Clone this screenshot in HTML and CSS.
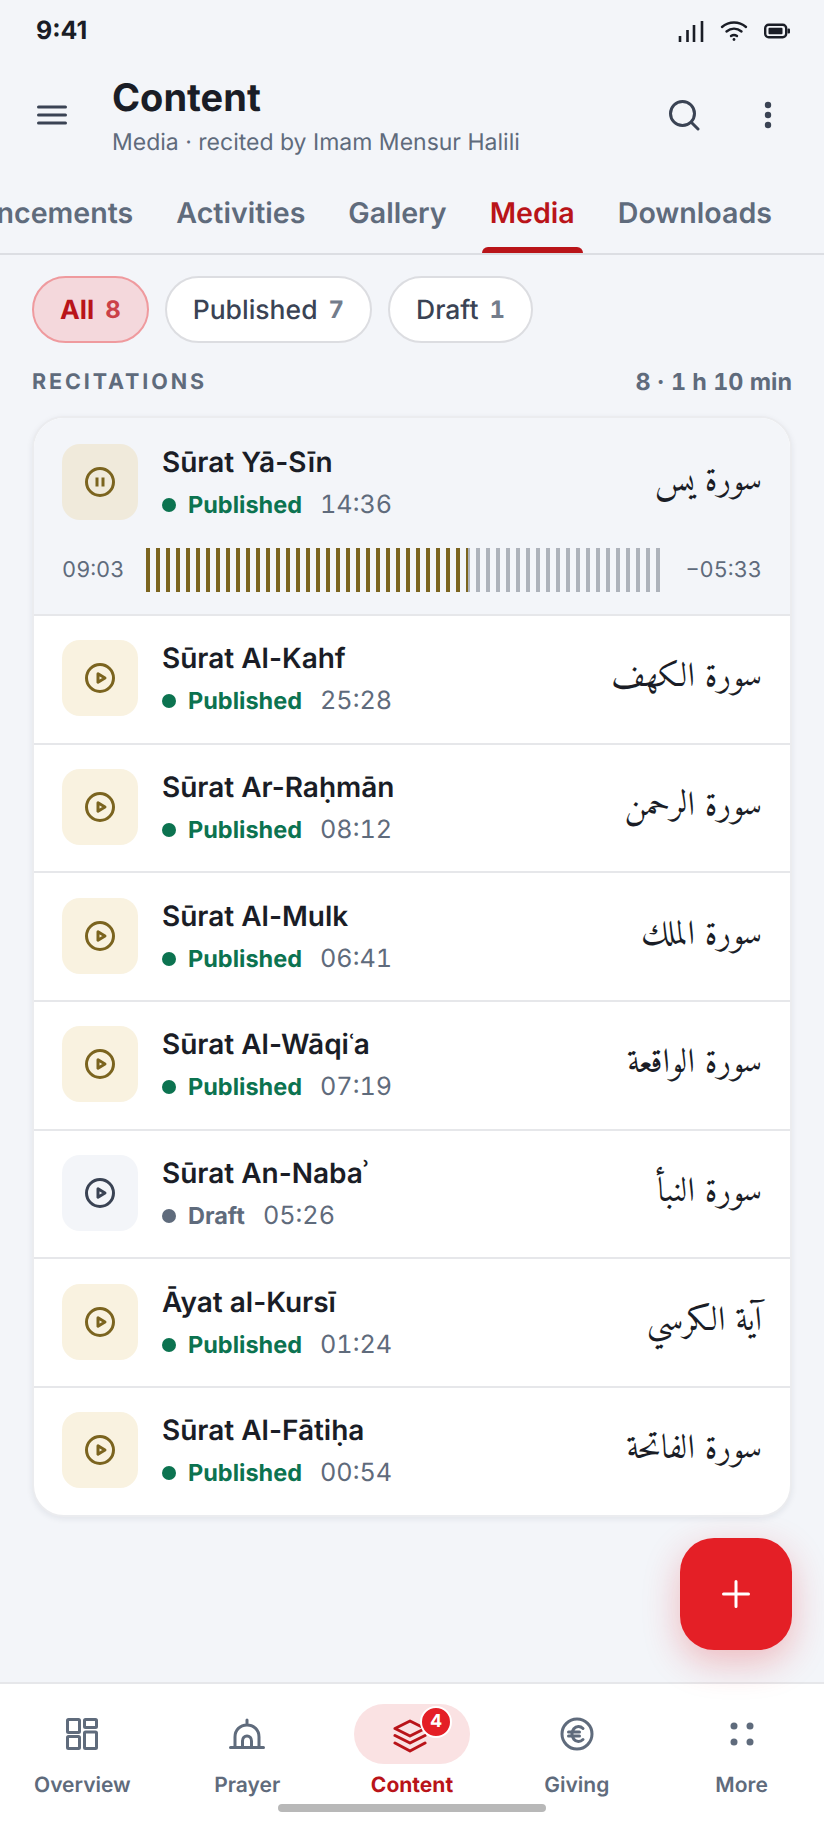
FILE: index.html
```html
<!DOCTYPE html>
<html lang="en">
<head>
    <meta charset="UTF-8">
    <meta name="viewport" content="width=device-width, initial-scale=1.0">
    <title>Content</title>
    <link rel="stylesheet" href="styles.css">
</head>
<body>
    <div class="status-bar">
        <span class="status-time">9:41</span>
        <div class="status-icons">
            <svg width="26" height="22" viewBox="0 0 26 22" fill="none" stroke="#1a1d26" stroke-width="2.6"><path d="M2 22v-6M9.500 22V10M16 22V5M24 22V1"/></svg>
            <svg width="28" height="20" viewBox="0 0 28 20" fill="none" stroke="#1a1d26" stroke-width="2.4" stroke-linecap="round"><path d="M2 6c7-6 17-6 24 0M6.500 10.500c4.500-3.800 10.500-3.800 15 0M11 15c1.800-1.300 4.200-1.300 6 0"/><circle cx="14" cy="18.500" r="1.400" fill="#1a1d26" stroke="none"/></svg>
            <svg width="26" height="16" viewBox="0 0 26 16" fill="none"><rect x="1.200" y="1.700" width="21" height="12.600" rx="3.500" stroke="#1a1d26" stroke-width="2.400"/><rect x="4.500" y="4.800" width="14" height="6.400" rx="1" fill="#1a1d26"/><rect x="23.500" y="5.500" width="2.500" height="5" rx="1" fill="#1a1d26"/></svg>
        </div>
    </div>

    <header class="app-header">
        <svg class="menu-icon" width="30" height="20" viewBox="0 0 30 20" fill="none" stroke="#3a4354" stroke-width="3" stroke-linecap="round"><path d="M1.500 2h27M1.500 10h27M1.500 18h27"/></svg>
        <div class="header-titles">
            <h1>Content</h1>
            <p>Media · recited by Imam Mensur Halili</p>
        </div>
        <svg class="search-icon" width="32" height="32" viewBox="0 0 32 32" fill="none" stroke="#3a4354" stroke-width="3" stroke-linecap="round"><circle cx="14.500" cy="14.500" r="12"/><path d="M23.500 23.500l6.500 6.500"/></svg>
        <svg class="more-icon" width="8" height="28" viewBox="0 0 8 28" fill="#3a4354"><circle cx="4" cy="4" r="3.200"/><circle cx="4" cy="14" r="3.200"/><circle cx="4" cy="24" r="3.200"/></svg>
    </header>

    <nav class="tabs">
        <a class="tab tab-cut" href="#">Announcements</a>
        <a class="tab" href="#">Activities</a>
        <a class="tab" href="#">Gallery</a>
        <a class="tab active" href="#">Media</a>
        <a class="tab" href="#">Downloads</a>
    </nav>

    <main>
        <div class="chips">
            <div class="chip chip-active">All <span>8</span></div>
            <div class="chip">Published <span>7</span></div>
            <div class="chip">Draft <span>1</span></div>
        </div>

        <div class="section-head">
            <h2>RECITATIONS</h2>
            <span>8 · 1 h 10 min</span>
        </div>

        <section class="card">
            <div class="row row-playing">
                <div class="row-top">
                    <div class="thumb thumb-playing">
                        <svg width="32" height="32" viewBox="0 0 32 32" fill="none" stroke="#7b641f" stroke-width="3"><circle cx="16" cy="16" r="13.500"/><path d="M13 11.500v9M19 11.500v9"/></svg>
                    </div>
                    <div class="row-text">
                        <div class="name">Sūrat Yā-Sīn</div>
                        <div class="meta"><i class="dot"></i><b>Published</b><span>14:36</span></div>
                    </div>
                    <div class="arabic" lang="ar" dir="rtl">سورة يس</div>
                </div>
                <div class="player">
                    <span class="time time-played">09:03</span>
                    <div class="wave"></div>
                    <span class="time time-left">−05:33</span>
                </div>
            </div>

            <div class="row">
                <div class="row-top">
                    <div class="thumb"><svg width="32" height="32" viewBox="0 0 32 32" fill="none" stroke="#7b641f" stroke-width="3" stroke-linejoin="round"><circle cx="16" cy="16" r="13.500"/><path d="M14 11.800l7 4.200-7 4.200z"/></svg></div>
                    <div class="row-text">
                        <div class="name">Sūrat Al-Kahf</div>
                        <div class="meta"><i class="dot"></i><b>Published</b><span>25:28</span></div>
                    </div>
                    <div class="arabic" lang="ar" dir="rtl">سورة الكهف</div>
                </div>
            </div>

            <div class="row">
                <div class="row-top">
                    <div class="thumb"><svg width="32" height="32" viewBox="0 0 32 32" fill="none" stroke="#7b641f" stroke-width="3" stroke-linejoin="round"><circle cx="16" cy="16" r="13.500"/><path d="M14 11.800l7 4.200-7 4.200z"/></svg></div>
                    <div class="row-text">
                        <div class="name">Sūrat Ar-Raḥmān</div>
                        <div class="meta"><i class="dot"></i><b>Published</b><span>08:12</span></div>
                    </div>
                    <div class="arabic" lang="ar" dir="rtl">سورة الرحمن</div>
                </div>
            </div>

            <div class="row">
                <div class="row-top">
                    <div class="thumb"><svg width="32" height="32" viewBox="0 0 32 32" fill="none" stroke="#7b641f" stroke-width="3" stroke-linejoin="round"><circle cx="16" cy="16" r="13.500"/><path d="M14 11.800l7 4.200-7 4.200z"/></svg></div>
                    <div class="row-text">
                        <div class="name">Sūrat Al-Mulk</div>
                        <div class="meta"><i class="dot"></i><b>Published</b><span>06:41</span></div>
                    </div>
                    <div class="arabic" lang="ar" dir="rtl">سورة الملك</div>
                </div>
            </div>

            <div class="row">
                <div class="row-top">
                    <div class="thumb"><svg width="32" height="32" viewBox="0 0 32 32" fill="none" stroke="#7b641f" stroke-width="3" stroke-linejoin="round"><circle cx="16" cy="16" r="13.500"/><path d="M14 11.800l7 4.200-7 4.200z"/></svg></div>
                    <div class="row-text">
                        <div class="name">Sūrat Al-Wāqiʿa</div>
                        <div class="meta"><i class="dot"></i><b>Published</b><span>07:19</span></div>
                    </div>
                    <div class="arabic" lang="ar" dir="rtl">سورة الواقعة</div>
                </div>
            </div>

            <div class="row">
                <div class="row-top">
                    <div class="thumb thumb-draft"><svg width="32" height="32" viewBox="0 0 32 32" fill="none" stroke="#3a4354" stroke-width="3" stroke-linejoin="round"><circle cx="16" cy="16" r="13.500"/><path d="M14 11.800l7 4.200-7 4.200z"/></svg></div>
                    <div class="row-text">
                        <div class="name">Sūrat An-Nabaʾ</div>
                        <div class="meta meta-draft"><i class="dot"></i><b>Draft</b><span>05:26</span></div>
                    </div>
                    <div class="arabic" lang="ar" dir="rtl">سورة النبأ</div>
                </div>
            </div>

            <div class="row">
                <div class="row-top">
                    <div class="thumb"><svg width="32" height="32" viewBox="0 0 32 32" fill="none" stroke="#7b641f" stroke-width="3" stroke-linejoin="round"><circle cx="16" cy="16" r="13.500"/><path d="M14 11.800l7 4.200-7 4.200z"/></svg></div>
                    <div class="row-text">
                        <div class="name">Āyat al-Kursī</div>
                        <div class="meta"><i class="dot"></i><b>Published</b><span>01:24</span></div>
                    </div>
                    <div class="arabic" lang="ar" dir="rtl">آية الكرسي</div>
                </div>
            </div>

            <div class="row">
                <div class="row-top">
                    <div class="thumb"><svg width="32" height="32" viewBox="0 0 32 32" fill="none" stroke="#7b641f" stroke-width="3" stroke-linejoin="round"><circle cx="16" cy="16" r="13.500"/><path d="M14 11.800l7 4.200-7 4.200z"/></svg></div>
                    <div class="row-text">
                        <div class="name">Sūrat Al-Fātiḥa</div>
                        <div class="meta"><i class="dot"></i><b>Published</b><span>00:54</span></div>
                    </div>
                    <div class="arabic" lang="ar" dir="rtl">سورة الفاتحة</div>
                </div>
            </div>
        </section>

        <button class="fab" type="button" aria-label="Add">
            <svg width="28" height="28" viewBox="0 0 28 28" fill="none" stroke="#fff" stroke-width="3" stroke-linecap="round"><path d="M14 1.500v25M1.500 14h25"/></svg>
        </button>
    </main>

    <nav class="bottom-nav">
        <a class="nav-item" href="#">
            <span class="nav-icon"><svg width="32" height="32" viewBox="0 0 32 32" fill="none" stroke="#5f6b7c" stroke-width="3"><rect x="1.500" y="1.500" width="12" height="13" rx="1"/><rect x="18.500" y="1.500" width="12" height="8" rx="1"/><rect x="1.500" y="18.500" width="12" height="12" rx="1"/><rect x="18.500" y="14" width="12" height="16.500" rx="1"/></svg></span>
            Overview
        </a>
        <a class="nav-item" href="#">
            <span class="nav-icon"><svg width="36" height="32" viewBox="0 0 36 32" fill="none" stroke="#5f6b7c" stroke-width="3" stroke-linecap="round"><path d="M1.500 29.500h33M6 29V19C6 12 11 7 18 7s12 5 12 12v10M13.500 29v-6c0-3 2-5 4.500-5s4.500 2 4.500 5v6M18 2v5"/></svg></span>
            Prayer
        </a>
        <a class="nav-item active" href="#">
            <span class="nav-icon">
                <svg class="layers-icon" width="34" height="34" viewBox="0 0 34 34" fill="none" stroke="#b91419" stroke-width="3" stroke-linejoin="round" stroke-linecap="round"><path d="M17 2L2 9.500 17 17l15-7.500zM2 16.500L17 24l15-7.500M2 24l15 8 15-8"/></svg>
                <em class="badge">4</em>
            </span>
            Content
        </a>
        <a class="nav-item" href="#">
            <span class="nav-icon"><svg width="34" height="34" viewBox="0 0 34 34" fill="none" stroke="#5f6b7c" stroke-width="3"><circle cx="17" cy="17" r="15"/><path d="M23 11.500c-1.300-1.300-3-2-4.600-2-3.700 0-6.400 3.300-6.400 7.500s2.700 7.500 6.400 7.500c1.600 0 3.300-.7 4.600-2M8.500 15h11M8.500 19h11" stroke-linecap="round"/></svg></span>
            Giving
        </a>
        <a class="nav-item" href="#">
            <span class="nav-icon"><svg width="24" height="24" viewBox="0 0 24 24" fill="#5f6b7c"><circle cx="4" cy="4" r="3.500"/><circle cx="20" cy="4" r="3.500"/><circle cx="4" cy="20" r="3.500"/><circle cx="20" cy="20" r="3.500"/></svg></span>
            More
        </a>
        <div class="home-bar"></div>
    </nav>
</body>
</html>
```

FILE: styles.css
```css
:root {
    --bg: #f3f5f9;
    --white: #ffffff;
    --ink: #1a1d26;
    --slate: #5f6b7c;
    --slate-dark: #3a4354;
    --line: #e6e7ea;
    --red: #b91419;
    --red-bright: #e41f26;
    --gold: #7b641f;
    --green: #0c7350;
}

* {
    box-sizing: border-box;
}

html, body {
    height: 100%;
}

body {
    margin: 0;
    height: 1830px;
    overflow: hidden;
    display: flex;
    flex-direction: column;
    background-color: var(--bg);
    color: var(--ink);
    font-family: Inter, "Noto Sans", sans-serif;
    text-rendering: geometricPrecision;
}

/* status bar */
.status-bar {
    height: 58px;
    flex: none;
    padding: 3px 34px 0 36px;
    display: flex;
    justify-content: space-between;
    align-items: center;
}

.status-time {
    font-size: 25px;
    font-weight: 700;
}

.status-icons {
    display: flex;
    align-items: center;
    gap: 16px;
}

/* header */
.app-header {
    height: 114px;
    flex: none;
    padding: 0 52px 0 37px;
    display: flex;
    align-items: center;
}

.header-titles {
    flex: 1;
    margin-left: 45px;
}

.header-titles h1 {
    margin: 0;
    font-size: 38px;
    line-height: 50px;
    font-weight: 700;
}

.header-titles p {
    margin: 4px 0 0;
    font-size: 23px;
    line-height: 30px;
    color: var(--slate);
}

.search-icon {
    margin-right: 64px;
}

/* tabs */
.tabs {
    height: 83px;
    flex: none;
    padding-right: 52px;
    display: flex;
    justify-content: flex-end;
    gap: 43px;
    border-bottom: 2px solid #dcdee3;
    overflow: hidden;
}

.tab {
    position: relative;
    padding-top: 24px;
    font-size: 28.600px;
    font-weight: 600;
    line-height: 34px;
    color: var(--slate);
    text-decoration: none;
    white-space: nowrap;
}

.tab.active {
    color: var(--red);
}

.tab.active::after {
    content: "";
    position: absolute;
    left: -8px;
    right: -8px;
    bottom: 0;
    height: 6px;
    border-radius: 6px 6px 0 0;
    background-color: var(--red);
}

/* filters */
main {
    position: relative;
    flex: 1;
    padding: 21px 32px 0;
}

.chips {
    display: flex;
    gap: 16px;
}

.chip {
    height: 67px;
    padding: 0 26px;
    display: flex;
    align-items: center;
    gap: 11px;
    border: 2px solid #dcdde1;
    border-radius: 34px;
    background-color: var(--white);
    font-size: 26.500px;
    font-weight: 500;
    color: var(--slate-dark);
}

.chip span {
    font-size: 24px;
    font-weight: 700;
    font-variant-numeric: tabular-nums;
    color: #737c8b;
}

.chip-active {
    border-color: #ef9a9e;
    background-color: #f4d8dc;
    color: var(--red);
    font-weight: 700;
}

.chip-active span {
    color: #cb4147;
}

.section-head {
    margin: 25px 0 20px;
    display: flex;
    justify-content: space-between;
    align-items: center;
    color: var(--slate);
}

.section-head h2 {
    margin: 0;
    font-size: 21.500px;
    line-height: 28px;
    font-weight: 700;
    letter-spacing: 2.900px;
}

.section-head span {
    font-size: 23.400px;
    line-height: 28px;
    font-weight: 700;
    font-variant-numeric: tabular-nums;
}

/* list */
.card {
    border: 2px solid #ebecef;
    border-radius: 32px;
    background-color: var(--white);
    overflow: hidden;
    box-shadow: 0 2px 6px rgba(30, 40, 60, 0.08);
}

.row {
    padding: 24.350px 28px 26.350px;
    border-top: 2px solid var(--line);
}

.row:first-child {
    border-top: 0;
}

.row-playing {
    padding-top: 26px;
    padding-bottom: 22.500px;
    background-color: var(--bg);
}

.row-top {
    display: flex;
    align-items: center;
}

.thumb {
    width: 76px;
    height: 76px;
    flex: none;
    display: flex;
    justify-content: center;
    align-items: center;
    border-radius: 18px;
    background-color: #f9f2e0;
}

.thumb-playing {
    background-color: #f0eadb;
}

.thumb-draft {
    background-color: var(--bg);
}

.row-text {
    flex: 1;
    height: 76px;
    margin-left: 24px;
}

.name {
    font-size: 28px;
    line-height: 36px;
    font-weight: 600;
}

.meta {
    height: 34px;
    margin-top: 8px;
    display: flex;
    align-items: center;
    color: var(--green);
}

.meta .dot {
    width: 14px;
    height: 14px;
    margin-right: 12px;
    border-radius: 50%;
    background-color: currentColor;
}

.meta b {
    font-size: 23.500px;
    line-height: 34px;
}

.meta span {
    margin-left: 18px;
    font-size: 25.200px;
    font-variant-numeric: tabular-nums;
    color: var(--slate);
}

.meta-draft {
    color: var(--slate);
}

.arabic {
    font-family: Amiri, "Noto Naskh Arabic", serif;
    font-size: 34px;
    line-height: 76px;
    color: var(--ink);
    white-space: nowrap;
}

/* player */
.player {
    margin-top: 27.500px;
    display: flex;
    align-items: center;
}

.time {
    font-size: 21.800px;
    font-variant-numeric: tabular-nums;
    color: var(--slate);
}

.time-played {
    width: 84px;
    flex: none;
}

.time-left {
    margin-left: auto;
}

.wave {
    width: 514px;
    height: 44px;
    background: linear-gradient(90deg, var(--gold) 322px, #adb2ba 322px);
    -webkit-mask-image: repeating-linear-gradient(90deg, #000 0, #000 4px, transparent 4px, transparent 10px);
    mask-image: repeating-linear-gradient(90deg, #000 0, #000 4px, transparent 4px, transparent 10px);
}

.fab {
    position: absolute;
    right: 32px;
    bottom: 32px;
    z-index: 2;
    width: 112px;
    height: 112px;
    display: flex;
    justify-content: center;
    align-items: center;
    border: 0;
    border-radius: 34px;
    background-color: var(--red-bright);
    box-shadow: 0 12px 36px rgba(228, 31, 38, 0.28);
}

/* bottom nav */
.bottom-nav {
    position: relative;
    height: 148px;
    flex: none;
    display: grid;
    grid-template-columns: repeat(5, 1fr);
    align-items: start;
    border-top: 2px solid var(--line);
    background-color: var(--white);
}

.nav-item {
    display: flex;
    flex-direction: column;
    align-items: center;
    padding-top: 20px;
    font-size: 21px;
    line-height: 28px;
    font-weight: 600;
    color: var(--slate);
    text-decoration: none;
}

.nav-icon {
    position: relative;
    width: 116px;
    height: 60px;
    margin-bottom: 8px;
    display: flex;
    justify-content: center;
    align-items: center;
    border-radius: 30px;
}

.nav-item.active {
    color: var(--red);
    font-weight: 700;
}

.nav-item.active .nav-icon {
    background-color: #fae2e3;
}

.layers-icon {
    margin: 4px 4px 0 0;
}

.badge {
    position: absolute;
    left: 66px;
    top: 2px;
    width: 32px;
    height: 32px;
    display: flex;
    justify-content: center;
    align-items: center;
    border: 2px solid var(--white);
    border-radius: 50%;
    background-color: var(--red-bright);
    color: var(--white);
    font-size: 18px;
    font-style: normal;
    font-weight: 700;
}

.home-bar {
    position: absolute;
    left: 278px;
    bottom: 18px;
    width: 268px;
    height: 8px;
    border-radius: 4px;
    background-color: #b8b8b8;
}
```
